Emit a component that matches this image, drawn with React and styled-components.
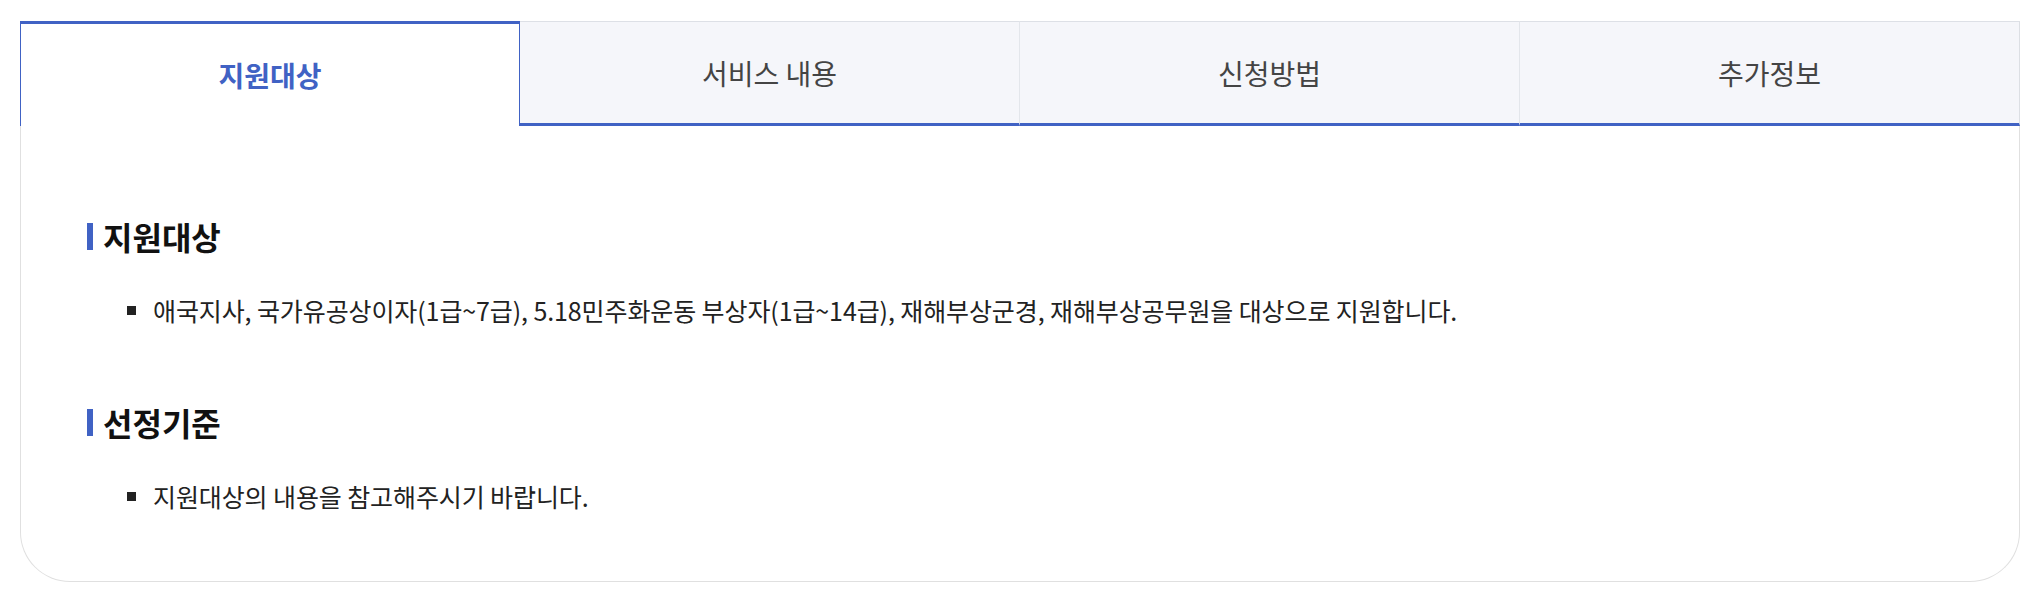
import React, { useState } from 'react';
import styled, { createGlobalStyle } from 'styled-components';

const GlobalStyle = createGlobalStyle`
  body {
    margin: 0;
    background: #fff;
    font-family: "Noto Sans CJK KR", "Noto Sans", sans-serif;
  }
  * { box-sizing: border-box; }
`;

const Page = styled.div`
  padding: 21px 22px 23px 20px;
`;

const Panel = styled.div`
  width: 2000px;
`;

const TabList = styled.div`
  display: grid;
  grid-template-columns: repeat(4, 1fr);
  height: 105px;
`;

const Tab = styled.button`
  font-family: inherit;
  font-size: 28px;
  letter-spacing: 0;
  cursor: pointer;
  margin: 0;
  padding: 0;
  display: flex;
  align-items: center;
  justify-content: center;
  background: ${p => (p.$active ? '#fff' : '#f5f6fa')};
  color: ${p => (p.$active ? '#4062c4' : '#444')};
  font-weight: ${p => (p.$active ? 700 : 400)};
  border-style: solid;
  border-color: ${p =>
    p.$active ? '#4062c4' : '#dde0e6 #e3e6eb #4062c4 transparent'};
  border-width: ${p => (p.$active ? '3px 1px 0 1px' : '1px 1px 3px 0')};
  &:last-child {
    border-right-color: #dcdfe4;
  }
`;

const Body = styled.div`
  border: 1px solid #e0e0e0;
  border-top: 0;
  border-radius: 0 0 50px 50px;
  padding: 92px 66px 68px;
`;

const Section = styled.section`
  & + & {
    margin-top: 77px;
  }
`;

const Heading = styled.h3`
  margin: 0;
  display: flex;
  align-items: center;
  font-size: 32px;
  line-height: 36px;
  font-weight: 700;
  color: #111;
  letter-spacing: 0;
  &::before {
    content: '';
    width: 6px;
    height: 27px;
    background: #4062c4;
    margin-right: 10px;
  }
`;

const List = styled.ul`
  list-style: none;
  margin: 39px 0 0;
  padding: 0 0 0 40px;
`;

const Item = styled.li`
  display: flex;
  align-items: center;
  font-size: 25px;
  line-height: 34px;
  color: #222;
  letter-spacing: -0.1px;
  &::before {
    content: '';
    flex: none;
    width: 9px;
    height: 9px;
    background: #222;
    margin-right: 17px;
  }
`;

const tabs = ['지원대상', '서비스 내용', '신청방법', '추가정보'];

const sections = [
  {
    title: '지원대상',
    items: [
      '애국지사, 국가유공상이자(1급~7급), 5.18민주화운동 부상자(1급~14급), 재해부상군경, 재해부상공무원을 대상으로 지원합니다.'
    ]
  },
  {
    title: '선정기준',
    items: ['지원대상의 내용을 참고해주시기 바랍니다.']
  }
];

const App = () => {
  const [active, setActive] = useState(0);
  return (
    <Page>
      <GlobalStyle />
      <Panel>
        <TabList>
          {tabs.map((t, i) => (
            <Tab key={t} $active={i === active} onClick={() => setActive(i)}>
              {t}
            </Tab>
          ))}
        </TabList>
        <Body>
          {sections.map(s => (
            <Section key={s.title}>
              <Heading>{s.title}</Heading>
              <List>
                {s.items.map(it => (
                  <Item key={it}>{it}</Item>
                ))}
              </List>
            </Section>
          ))}
        </Body>
      </Panel>
    </Page>
  );
};

export default App;
